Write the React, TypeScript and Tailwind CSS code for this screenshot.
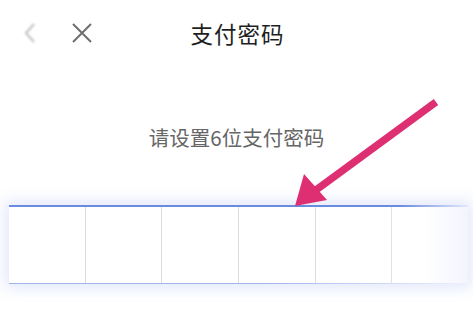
export default function App() {
  const cells = [0, 1, 2, 3, 4, 5];
  return (
    <div
      className="relative w-[473px] h-[314px] bg-white overflow-hidden"
      style={{ fontFamily: '"Noto Sans CJK SC", "Noto Sans", sans-serif' }}
    >
      {/* header */}
      <div className="grid grid-cols-[1fr_auto_1fr] items-center h-[66px]">
        <div className="flex items-center gap-[33px] pl-[22px]">
          <svg width="16" height="22" viewBox="0 0 16 22" className="blur-[0.8px]">
            <path d="M12 2 L4 11 L12 20" fill="none" stroke="#c4c4c4" strokeWidth="2.2" />
          </svg>
          <svg width="22" height="22" viewBox="0 0 22 22">
            <path d="M2 2 L20 20 M20 2 L2 20" fill="none" stroke="#6f6f6f" strokeWidth="2" />
          </svg>
        </div>
        <div className="text-[22.5px] leading-none text-[#1f1f1f] tracking-[1px] pl-[2px]">支付密码</div>
        <div />
      </div>

      <div className="mt-[57px] text-center text-[20.5px] leading-[28px] text-[#666666]">
        请设置6位支付密码
      </div>

      {/* password box */}
      <div className="mt-[54px] ml-[9px] w-[459px] h-[79px] flex flex-col shadow-[0_0_14px_4px_rgba(110,140,235,0.2)]">
        <div className="h-[1.5px] bg-[linear-gradient(to_right,#6a8be0_0%,#6a8be0_85%,rgba(160,180,240,0.3)_100%)]" />
        <div className="flex flex-1">
          {cells.map((i) => (
            <div
              key={i}
              className={
                i === 0
                  ? "flex-1 bg-white"
                  : i === 5
                  ? "flex-1 bg-[linear-gradient(to_right,#ffffff_40%,#f3f5fd_100%)] border-l border-l-[#e2e2e2]"
                  : "flex-1 bg-white border-l border-l-[#dcdcdc]"
              }
            />
          ))}
        </div>
        <div className="h-[1.5px] bg-[linear-gradient(to_right,#9fb3ec_0%,#9fb3ec_55%,rgba(200,210,245,0.3)_100%)]" />
      </div>

      {/* annotation arrow */}
      <svg className="absolute left-0 top-0" width="473" height="314" viewBox="0 0 473 314">
        <line x1="436" y1="102" x2="316" y2="190" stroke="#dd2f72" strokeWidth="7.5" strokeLinecap="butt" />
        <polygon points="295,206 304,174 327,200" fill="#dd2f72" />
      </svg>
    </div>
  );
}
